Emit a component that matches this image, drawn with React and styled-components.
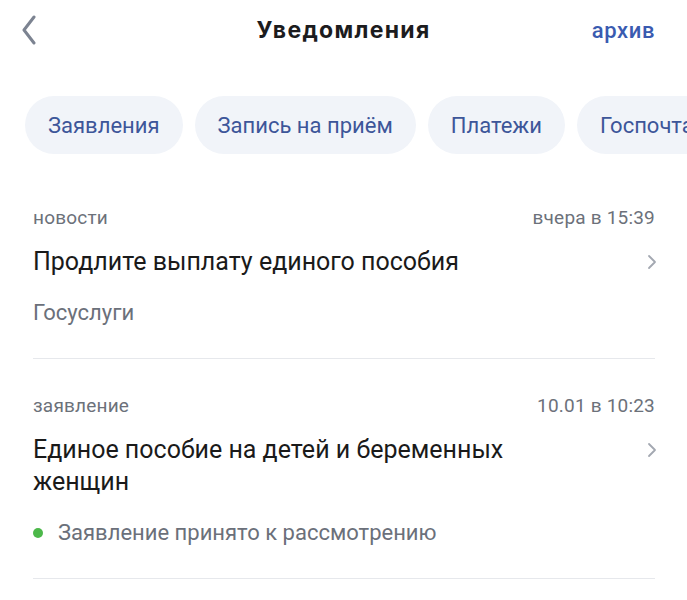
import styled, { createGlobalStyle } from "styled-components"

const GlobalStyle = createGlobalStyle`
  body {
    margin: 0;
    background: #fff;
    font-family: Roboto, "Noto Sans", sans-serif;
    color: #1c1c1e;
  }
`

const chips = ["Заявления", "Запись на приём", "Платежи", "Госпочта"]

const items = [
    {
        category: "новости",
        time: "вчера в 15:39",
        title: "Продлите выплату единого пособия",
        note: "Госуслуги",
    },
    {
        category: "заявление",
        time: "10.01 в 10:23",
        title: "Единое пособие на детей и беременных женщин",
        note: "Заявление принято к рассмотрению",
        status: "#4cb84a",
    },
]

function Chevron({ left }) {
    return (
        <svg width={left ? 16 : 10} height={left ? 30 : 16} viewBox={left ? "0 0 16 30" : "0 0 10 16"} fill="none">
            {left ? (
                <path d="M13 2 L3 15 L13 28" stroke="#7c8391" strokeWidth="3" strokeLinecap="round" strokeLinejoin="round" />
            ) : (
                <path d="M2 2 L8 8 L2 14" stroke="#a3a8b1" strokeWidth="1.8" strokeLinecap="round" strokeLinejoin="round" />
            )}
        </svg>
    )
}

export default function App() {
    return (
        <Wrapper>
            <GlobalStyle />
            <Header>
                <BackButton><Chevron left /></BackButton>
                <Title>Уведомления</Title>
                <Archive>архив</Archive>
            </Header>
            <ChipRow>
                {chips.map((c) => (
                    <Chip key={c}>{c}</Chip>
                ))}
            </ChipRow>
            <List>
                {items.map((it) => (
                    <Item key={it.title}>
                        <Meta>
                            <span>{it.category}</span>
                            <span>{it.time}</span>
                        </Meta>
                        <TitleRow>
                            <ItemTitle>{it.title}</ItemTitle>
                            <ArrowBox><Chevron /></ArrowBox>
                        </TitleRow>
                        <Note>
                            {it.status && <Dot $color={it.status} />}
                            {it.note}
                        </Note>
                    </Item>
                ))}
            </List>
        </Wrapper>
    )
}

const Wrapper = styled.div`
    width: 687px;
    height: 600px;
    overflow: hidden;
`

const Header = styled.div`
    height: 60px;
    display: grid;
    grid-template-columns: 1fr auto 1fr;
    align-items: center;
    padding: 0 32px;
`

const BackButton = styled.div`
    display: flex;
    align-items: center;
    margin-left: -11px;
`

const Title = styled.div`
    font-family: Inter, Roboto, sans-serif;
    font-size: 23px;
    font-weight: 700;
    letter-spacing: 1.3px;
    color: #1c1c1e;
`

const Archive = styled.div`
    justify-self: end;
    font-size: 22px;
    font-weight: 500;
    letter-spacing: 0.6px;
    color: #3a5bb0;
`

const ChipRow = styled.div`
    display: flex;
    gap: 12px;
    margin-top: 36px;
    padding-left: 25px;
    white-space: nowrap;
    overflow: hidden;
`

const Chip = styled.div`
    flex: none;
    height: 58px;
    display: flex;
    align-items: center;
    padding: 0 23px;
    border-radius: 29px;
    background: #f1f4f9;
    color: #3d5699;
    font-size: 22px;
`

const List = styled.div`
    margin-top: 17px;
    padding: 0 32px 0 33px;
`

const Item = styled.div`
    padding: 35px 0 31px;
    border-bottom: 1px solid #e6e8ec;
`

const Meta = styled.div`
    display: flex;
    justify-content: space-between;
    font-size: 19px;
    line-height: 24px;
    letter-spacing: 0.2px;
    color: #6c717a;
`

const TitleRow = styled.div`
    display: flex;
    align-items: flex-start;
    justify-content: space-between;
    margin-top: 16px;
`

const ItemTitle = styled.div`
    max-width: 540px;
    font-size: 25px;
    line-height: 32px;
    color: #1a1a1a;
`

const ArrowBox = styled.div`
    height: 32px;
    display: flex;
    align-items: center;
    margin-right: -2px;
`

const Note = styled.div`
    display: flex;
    align-items: center;
    margin-top: 21px;
    font-size: 22px;
    line-height: 28px;
    color: #6b707a;
`

const Dot = styled.span`
    width: 10px;
    height: 10px;
    border-radius: 50%;
    background: ${(p) => p.$color};
    margin: 0 15px 0 0;
`
